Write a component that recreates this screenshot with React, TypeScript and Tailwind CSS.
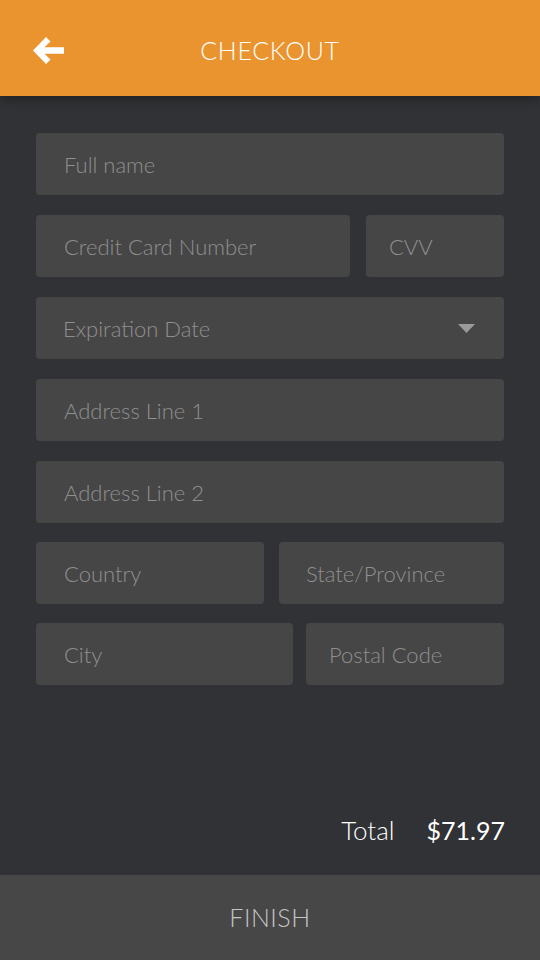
const font = { fontFamily: 'Lato, "Noto Sans", sans-serif' };

function Field({
  label,
  className = '',
  pad = 'pl-[28px] pr-[30px]',
  children,
}: {
  label: string;
  className?: string;
  pad?: string;
  children?: React.ReactNode;
}) {
  return (
    <div className={`h-[62px] rounded-[4px] bg-[#464646] flex items-center justify-between ${pad} ${className}`}>
      <span className="text-[22px] font-light text-[#8f8f8f] whitespace-nowrap">{label}</span>
      {children}
    </div>
  );
}

export default function App() {
  return (
    <div className="w-[540px] h-[960px] bg-[#313235] flex flex-col" style={font}>
      {/* Header */}
      <div className="h-[96px] bg-[#ea9430] flex items-center relative shrink-0 shadow-[0_4px_10px_rgba(0,0,0,0.3)] z-10">
        <svg className="absolute left-[33px] top-[37px]" width="31" height="27" viewBox="0 0 31 27">
          <path d="M13 0 L0 13.5 L13 27 L17.5 22.5 L11.5 16.8 L31 16.8 L31 10.2 L11.5 10.2 L17.5 4.5 Z" fill="#fff" />
        </svg>
        <h1 className="w-full text-center text-white text-[25px] font-light tracking-[0.7px] pt-[5px]">CHECKOUT</h1>
      </div>

      {/* Form */}
      <div className="flex-1 flex flex-col gap-[20px] px-[36px] pt-[37px]">
        <Field label="Full name" />
        <div className="flex gap-[16px]">
          <Field label="Credit Card Number" className="w-[314px]" />
          <Field label="CVV" className="flex-1" pad="pl-[23px] pr-[10px]" />
        </div>
        <Field label="Expiration Date" pad="pl-[27px] pr-[29px]">
          <svg width="17" height="9" viewBox="0 0 17 9">
            <path d="M0 0 L17 0 L8.5 9 Z" fill="#9a9a9a" />
          </svg>
        </Field>
        <Field label="Address Line 1" />
        <Field label="Address Line 2" />
        <div className="flex gap-[15px] -mt-[1px]">
          <Field label="Country" className="w-[228px]" />
          <Field label="State/Province" className="flex-1" pad="pl-[27px] pr-[10px]" />
        </div>
        <div className="flex gap-[13px] -mt-[1px]">
          <Field label="City" className="w-[257px]" />
          <Field label="Postal Code" className="flex-1" pad="pl-[23px] pr-[10px]" />
        </div>
      </div>

      {/* Total */}
      <div className="flex justify-end items-center gap-[32px] pr-[35px] pb-[25px] text-white text-[26px]">
        <span className="font-light">Total</span>
        <span className="font-normal text-[25px]">$71.97</span>
      </div>

      {/* Finish */}
      <div className="h-[85px] bg-[#474747] flex items-center justify-center shrink-0">
        <span className="text-[#c4c4c4] text-[25px] font-light tracking-[0.5px]">FINISH</span>
      </div>
    </div>
  );
}
